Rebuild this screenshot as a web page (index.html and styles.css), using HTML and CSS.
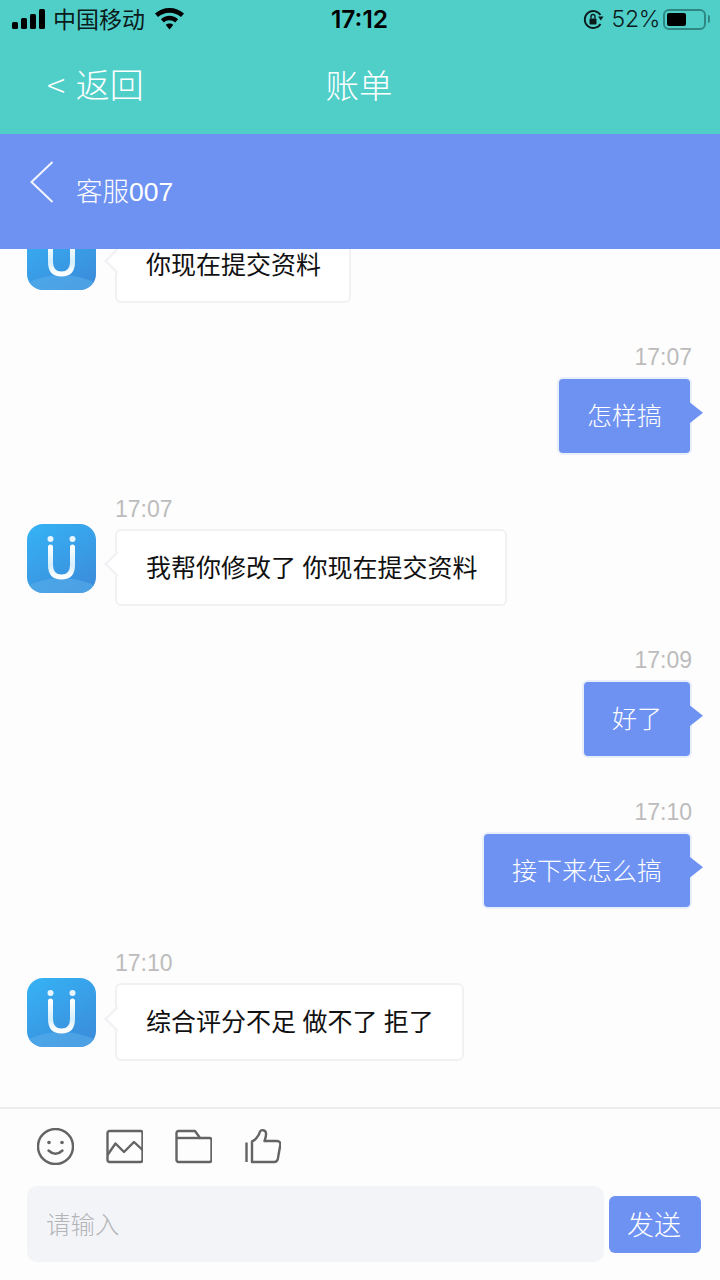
FILE: index.html
```html
<!DOCTYPE html>
<html lang="zh-CN">
<head>
<meta charset="utf-8">
<title>账单</title>
<link rel="stylesheet" href="styles.css">
</head>
<body>
<svg class="defs" width="0" height="0" aria-hidden="true">
  <defs>
    <linearGradient id="av" x1="0.2" y1="0" x2="0.8" y2="1"><stop offset="0" stop-color="#36b0f3"/><stop offset="1" stop-color="#3b8cdb"/></linearGradient>
    <linearGradient id="uu" x1="0" y1="0" x2="0" y2="1"><stop offset="0" stop-color="#ffffff"/><stop offset="0.6" stop-color="#d5eefd"/><stop offset="1" stop-color="#ffffff"/></linearGradient>
    <clipPath id="avclip"><rect width="69" height="69" rx="16"/></clipPath>
    <symbol id="avatar" viewBox="0 0 69 69">
      <rect width="69" height="69" rx="16" fill="url(#av)"/>
      <path d="M0 62Q34 46 69 62V69H0Z" fill="#58ade9" opacity=".6" clip-path="url(#avclip)"/>
      <circle cx="23.500" cy="15" r="3" fill="#e9f6ff"/>
      <circle cx="45.500" cy="15" r="3" fill="#e9f6ff"/>
      <path d="M23.500 23V41Q23.500 53 34.500 53T45.500 41V23" fill="none" stroke="url(#uu)" stroke-width="5" stroke-linecap="round"/>
    </symbol>
  </defs>
</svg>
<div class="screen">
  <header class="top">
    <div class="status">
      <div class="status-left">
        <svg class="signal" width="33" height="20" viewBox="0 0 33 20"><rect x="0" y="13" width="6" height="7" rx="1.500"/><rect x="9" y="9" width="6" height="11" rx="1.500"/><rect x="18" y="5" width="6" height="15" rx="1.500"/><rect x="27" y="0" width="6" height="20" rx="1.500"/></svg>
        <span class="carrier">中国移动</span>
        <svg class="wifi" width="29" height="22" viewBox="0 0 29 22"><path d="M14.500 0C9 0 4 2 0 5.500L3 9C6 6.300 10 4.700 14.500 4.700S23 6.300 26 9L29 5.500C25 2 20 0 14.500 0Z"/><path d="M14.500 7.800C11.300 7.800 8.200 9 5.900 11.200L8.900 14.500C10.400 13.100 12.300 12.300 14.500 12.300S18.600 13.100 20.100 14.500L23.100 11.200C20.800 9 17.700 7.800 14.500 7.800Z"/><path d="M14.500 15.500C13 15.500 11.800 16 10.800 16.900L14.500 21.500L18.200 16.900C17.200 16 16 15.500 14.500 15.500Z"/></svg>
      </div>
      <div class="clock">17:12</div>
      <div class="status-right">
        <svg class="lock" width="21" height="21" viewBox="0 0 21 21"><path d="M17.500 6A8.500 8.500 0 1 0 17.500 15" fill="none" stroke="#0b1b1b" stroke-width="1.800"/><path d="M15 7.500H20.500L17.800 11.500Z" fill="#0b1b1b"/><rect x="6.500" y="9.500" width="7" height="6" rx="1" fill="#0b1b1b"/><path d="M8 9.500V7.500A2 2 0 0 1 12 7.500V9.500" fill="none" stroke="#0b1b1b" stroke-width="1.400"/></svg>
        <span class="percent">52%</span>
        <span class="battery"><span class="battery-fill"></span></span>
        <span class="battery-cap"></span>
      </div>
    </div>
    <nav class="nav">
      <div class="nav-back">&lt; 返回</div>
      <div class="nav-title">账单</div>
      <div></div>
    </nav>
  </header>
  <div class="subhead">
    <svg class="chevron" width="24" height="42" viewBox="0 0 24 42"><path d="M22.500 1L1.500 21L22.500 41" fill="none" stroke="#f2f5ff" stroke-width="2"/></svg>
    <div class="subhead-title">客服007</div>
  </div>
  <main class="chat">
    <div class="msg msg-in">
      <svg class="avatar"><use href="#avatar"/></svg>
      <div class="msg-body">
        <div class="time">17:07</div>
        <div class="bubble">你现在提交资料</div>
      </div>
    </div>
    <div class="msg msg-out">
      <div class="msg-body">
        <div class="time">17:07</div>
        <div class="bubble">怎样搞</div>
      </div>
    </div>
    <div class="msg msg-in">
      <svg class="avatar"><use href="#avatar"/></svg>
      <div class="msg-body">
        <div class="time">17:07</div>
        <div class="bubble">我帮你修改了 你现在提交资料</div>
      </div>
    </div>
    <div class="msg msg-out">
      <div class="msg-body">
        <div class="time">17:09</div>
        <div class="bubble">好了</div>
      </div>
    </div>
    <div class="msg msg-out">
      <div class="msg-body">
        <div class="time">17:10</div>
        <div class="bubble">接下来怎么搞</div>
      </div>
    </div>
    <div class="msg msg-in">
      <svg class="avatar"><use href="#avatar"/></svg>
      <div class="msg-body">
        <div class="time">17:10</div>
        <div class="bubble">综合评分不足 做不了 拒了</div>
      </div>
    </div>
  </main>
  <footer class="composer">
    <div class="tools">
      <svg class="tool" width="37" height="37" viewBox="0 0 37 37"><circle cx="18.500" cy="18.500" r="17.500"/><circle class="solid" cx="12" cy="14.500" r="1.800"/><circle class="solid" cx="25" cy="14.500" r="1.800"/><path d="M11.500 22.500Q18.500 29 25.500 22.500" stroke-linecap="round"/></svg>
      <svg class="tool" width="37" height="37" viewBox="0 0 37 37"><rect x="1.500" y="3" width="35" height="31" rx="2"/><path d="M1.500 27L9.500 15.500L18 24L28 14L36.500 22"/></svg>
      <svg class="tool" width="37" height="37" viewBox="0 0 37 37"><path d="M1.500 5A2 2 0 0 1 3.500 3H20L25 10H34.500A2 2 0 0 1 36.500 12V32A2 2 0 0 1 34.500 34H3.500A2 2 0 0 1 1.500 32Z"/><path d="M1.500 10H25"/></svg>
      <svg class="tool" width="37" height="37" viewBox="0 0 37 37"><path d="M2.500 14.500V34" stroke-width="2.400"/><path d="M8 13.500C11 12.500 15 8 16 3.500C17 1.500 21.500 1.500 22 5C22.500 8 21 11 20.500 13H33C35.500 13 36.800 15 36.300 17L33.800 31C33.300 33 32.300 34 30.300 34H8Z"/></svg>
    </div>
    <div class="input-row">
      <div class="input">请输入</div>
      <div class="send">发送</div>
    </div>
  </footer>
</div>
</body>
</html>
```

FILE: styles.css
```css
* { box-sizing: border-box; }
html, body { margin: 0; padding: 0; }
body { font-family: "Noto Sans CJK SC", "Noto Sans", sans-serif; font-weight: 300; background: #fdfdfe; }
.defs { display: block; height: 0; }
.screen { width: 720px; height: 1280px; display: flex; flex-direction: column; overflow: hidden; background: #fdfdfe; }

.top { height: 134px; background: #50cfc9; flex: none; }
.status { height: 40px; display: grid; grid-template-columns: 1fr auto 1fr; align-items: center; padding: 0 10px 2px 12px; color: #0b1b1b; }
.status-left { display: flex; align-items: center; }
.signal { fill: #000; margin-right: 8px; }
.carrier { font-size: 23px; line-height: 30px; font-weight: 400; margin-top: -2px; }
.wifi { fill: #000; margin-left: 10px; }
.clock { font-family: "Inter", "Liberation Sans", sans-serif; font-size: 24.500px; line-height: 30px; font-weight: 600; color: #000; margin-right: 3px; }
.status-right { display: flex; align-items: center; justify-content: flex-end; }
.lock { margin-right: 8px; }
.percent { font-family: "Inter", "Liberation Sans", sans-serif; font-size: 23px; line-height: 30px; font-weight: 300; color: #0b1b1b; margin-right: 3px; letter-spacing: -0.300px; }
.battery { width: 43px; height: 21px; border: 2px solid #2f8784; border-radius: 6px; padding: 2px; display: flex; }
.battery-fill { width: 19px; background: #000; border-radius: 2px; }
.battery-cap { width: 2px; height: 8px; background: #2f8784; border-radius: 0 2px 2px 0; margin-left: 2px; }

.nav { height: 94px; display: grid; grid-template-columns: 1fr auto 1fr; align-items: center; padding: 0 0 6px 47px; color: #fff; }
.nav-back { font-size: 34px; line-height: 50px; word-spacing: 3px; }
.nav-title { font-size: 33.500px; line-height: 50px; margin-right: 49px; }

.subhead { height: 115px; flex: none; background: #6e92f2; display: flex; align-items: flex-start; padding: 27px 0 0 30px; color: #fff; }
.chevron { flex: none; }
.subhead-title { font-family: "Liberation Sans", "Noto Sans CJK SC", sans-serif; font-size: 26.500px; line-height: 36px; margin: 13px 0 0 22px; }

.chat { flex: 1; min-height: 0; overflow: hidden; display: flex; flex-direction: column; justify-content: flex-end; gap: 43px; padding: 0 28px 46.500px 27px; }
.msg { display: flex; flex: none; }
.msg-in { gap: 19px; }
.msg-out { justify-content: flex-end; }
.avatar { width: 69px; height: 69px; margin-top: 26px; flex: none; }
.msg-body { display: flex; flex-direction: column; gap: 9px; }
.msg-out .msg-body { align-items: flex-end; }
.time { font-family: "Liberation Sans", sans-serif; font-size: 23px; line-height: 22px; color: #bcbcbc; font-weight: 400; }
.bubble { position: relative; height: 77.500px; padding: 0 28px 3px; display: flex; align-items: center; font-size: 25px; white-space: pre; word-spacing: 0.800px; border-radius: 6px; border: 2px solid; }
.msg-in .bubble { background: #fff; border-color: #f1f1f3; color: #111; font-weight: 400; padding-left: 29px; }
.msg-out .bubble { background: #6e92f2; border-color: #e9eefb; color: #fff; }
.bubble::after { content: ""; position: absolute; top: calc(50% - 3px); }
.msg-in .bubble::after { left: -9px; width: 16px; height: 16px; transform: translateY(-50%) rotate(45deg); background: #fff; border-left: 2px solid #f1f1f3; border-bottom: 2px solid #f1f1f3; }
.msg-out .bubble::after { right: -13px; width: 14px; height: 22px; transform: translateY(-50%); background: #6e92f2; clip-path: polygon(0 0, 100% 50%, 0 100%); }

.composer { height: 173px; flex: none; border-top: 2px solid #ececee; background: #fdfdfe; padding: 19px 19px 0 27px; }
.tools { display: flex; gap: 32px; padding-left: 10px; height: 37px; }
.tool { fill: none; stroke: #646464; stroke-width: 2.400; stroke-linejoin: round; }
.tool .solid { fill: #646464; stroke: none; }
.input-row { display: flex; align-items: center; gap: 5px; margin-top: 21px; }
.input { flex: 1; height: 76px; background: #f3f4f8; border-radius: 10px; padding: 0 0 2px 19px; display: flex; align-items: center; font-size: 24.500px; color: #b4b4b8; }
.send { width: 92px; height: 57px; background: #6e92f2; border-radius: 6px; color: #fff; font-size: 27px; padding: 0 2px 2px 0; display: flex; align-items: center; justify-content: center; }
```
